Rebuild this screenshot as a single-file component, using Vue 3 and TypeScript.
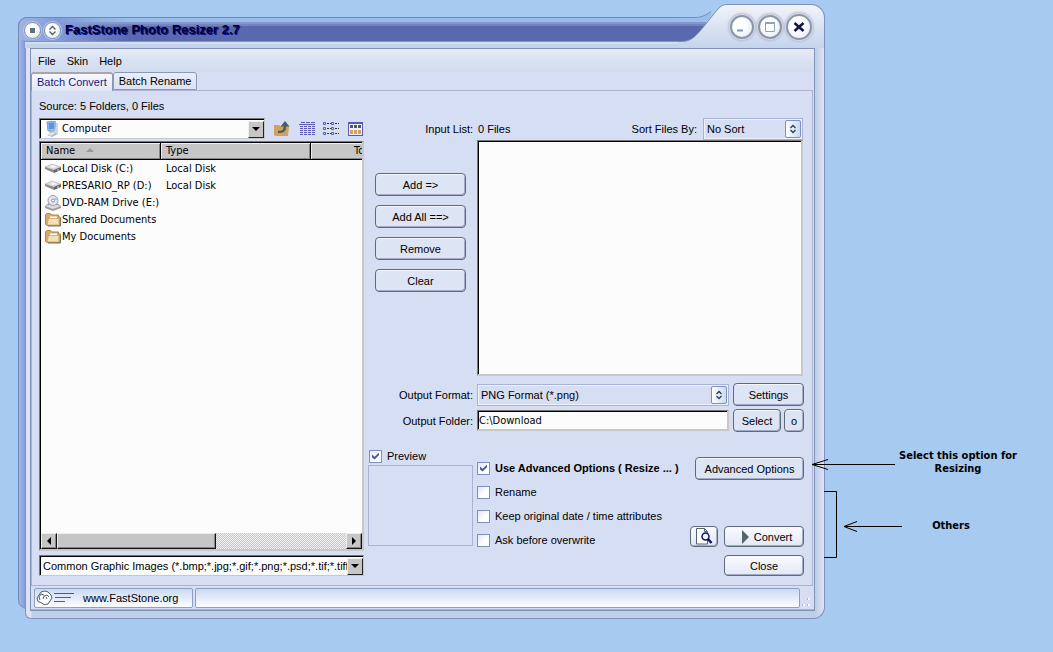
<script setup lang="ts">
import { ref } from 'vue'

interface Entry {
  name: string
  type: string
  icon: 'disk' | 'dvd' | 'folder'
}

const entries: Entry[] = [
  { name: 'Local Disk (C:)', type: 'Local Disk', icon: 'disk' },
  { name: 'PRESARIO_RP (D:)', type: 'Local Disk', icon: 'disk' },
  { name: 'DVD-RAM Drive (E:)', type: '', icon: 'dvd' },
  { name: 'Shared Documents', type: '', icon: 'folder' },
  { name: 'My Documents', type: '', icon: 'folder' },
]
const menus = ['File', 'Skin', 'Help']
const listActions = ['Add =>', 'Add All ==>', 'Remove', 'Clear']
const outputFolder = ref('C:\\Download')
const preview = ref(true)
const options = ref([
  { id: 'advanced', label: 'Use Advanced Options ( Resize ... )', on: true },
  { id: 'rename', label: 'Rename', on: false },
  { id: 'keep', label: 'Keep original date / time attributes', on: false },
  { id: 'ask', label: 'Ask before overwrite', on: false },
])
</script>

<template>
  <div class="page">
    <main class="window">
      <div class="shade"></div>
      <header class="titlebar">
        <div class="rail">
          <button class="orb small" type="button" aria-label="Window menu">
            <svg width="15" height="15" viewBox="0 0 15 15"><rect x="5" y="5" width="5" height="5" fill="#5d7480" /></svg>
          </button>
          <button class="orb small" type="button" aria-label="Roll up">
            <svg width="15" height="15" viewBox="0 0 15 15"><path d="M4.500 6.500l3-3 3 3M4.500 8.500l3 3 3-3" fill="none" stroke="#4d626e" stroke-width="1.400" /></svg>
          </button>
          <h1>FastStone Photo Resizer 2.7</h1>
        </div>
        <svg class="swoosh" width="50" height="44" viewBox="0 0 50 44">
          <defs>
            <linearGradient id="hood" x1="0" y1="0" x2="0" y2="1">
              <stop offset="0" stop-color="#f1f3fb" />
              <stop offset="0.500" stop-color="#dbe3f3" />
              <stop offset="1" stop-color="#c4d4ec" />
            </linearGradient>
          </defs>
          <path d="M0 13.500h17c7 0 12-3 16-6v5L10 38H0z" fill="#9bbdeb" />
          <path d="M0 18h30l-3 5H0z" fill="#8296d2" />
          <path d="M0 20h29l-2 4H0z" fill="#7585b4" />
          <path d="M0 22h28L15 37H0z" fill="#5a68ae" />
          <path d="M0 44V37.500h4c10 0 15-7 21-14S36 9 41 4c3-3 5-3.500 9-3.500V44z" fill="url(#hood)" />
          <path d="M0 13.500h17c7 0 12-3 16-6M0 37.500h4c10 0 15-7 21-14S36 9 41 4c3-3 5-3.500 9-3.500" fill="none" stroke="#7b8db6" />
        </svg>
        <div class="hood">
          <div class="orbs">
            <button class="orb" type="button" aria-label="Minimize">
              <svg width="20" height="20" viewBox="0 0 20 20"><path d="M5 13.500h6" stroke="#7f96b5" stroke-width="2" /></svg>
            </button>
            <button class="orb" type="button" aria-label="Maximize">
              <svg width="20" height="20" viewBox="0 0 20 20"><path d="M5.500 6v8.500h9V6M5 6h10" fill="none" stroke="#8ba2c4" /><path d="M5 6h10" stroke="#8ba2c4" stroke-width="2" /></svg>
            </button>
            <button class="orb big" type="button" aria-label="Close window">
              <svg width="22" height="22" viewBox="0 0 22 22"><path d="M6.500 7l9 8M15.500 7l-9 8" stroke="#16164f" stroke-width="2.600" /></svg>
            </button>
          </div>
        </div>
      </header>

      <div class="frame">
        <div class="client">
          <nav class="menu">
            <button v-for="m in menus" :key="m" type="button">{{ m }}</button>
          </nav>
          <div class="tabs">
            <button class="tab active" type="button">Batch Convert</button>
            <button class="tab" type="button">Batch Rename</button>
          </div>

          <div class="panel">
            <section class="source">
              <div class="caption">Source: 5 Folders, 0 Files</div>
              <div class="toolrow">
                <div class="combo drive">
                  <svg class="pc" width="16" height="16" viewBox="0 0 16 16">
                    <path d="M3 1l8-1 1 9-8 1z" fill="#9cc4ee" stroke="#7f9cc4" />
                    <path d="M4.500 2l5.500-.5.500 6-5.500 1z" fill="#5597e6" />
                    <path d="M12 2h2v11l-3 2V9z" fill="#cdd4dd" />
                    <path d="M5 10l5-1 1 3 2 1-5 3-5-2 3-1z" fill="#aeb8c6" />
                    <path d="M4 13l5-2 2 1-4 3z" fill="#e3e8ef" />
                  </svg>
                  <select aria-label="Drive"><option>Computer</option></select>
                  <span class="drop"></span>
                </div>
                <button class="tool" type="button" aria-label="Up one level">
                  <svg width="16" height="16" viewBox="0 0 16 16">
                    <path d="M0 4h5l1 1h9l-1 10H1L0 14z" fill="#d2a15c" />
                    <path d="M4 11c5 0 7-1 7-6" fill="none" stroke="#4a5d66" stroke-width="2.500" />
                    <path d="M6.500 5.500 11 0l4.500 5.500z" fill="#4a5d66" />
                  </svg>
                </button>
                <button class="tool" type="button" aria-label="Details">
                  <svg width="16" height="16" viewBox="0 0 16 16">
                    <path d="M2 1.500h14" stroke="#5a5ab4" stroke-dasharray="4 1" />
                    <path d="M0 3.500h16" stroke="#5a5ab4" />
                    <path d="M1 5.500h15M1 7.500h15M1 9.500h15M1 11.500h15M1 13.500h15" stroke="#5a5ab4" stroke-dasharray="3 1" />
                  </svg>
                </button>
                <button class="tool" type="button" aria-label="List">
                  <svg width="16" height="16" viewBox="0 0 16 16">
                    <path d="M.500 1.500h2v2h-2zM.500 6.500h2v2h-2zM.500 11.500h2v2h-2zM8.500 1.500h2v2h-2zM8.500 6.500h2v2h-2zM8.500 11.500h2v2h-2z" fill="none" stroke="#5a5ab4" />
                    <path d="M4 2.500h4M4 7.500h4M4 12.500h4M12 2.500h4M12 7.500h4M12 12.500h4" stroke="#333" stroke-dasharray="2 1" />
                  </svg>
                </button>
                <button class="tool" type="button" aria-label="Thumbnails">
                  <svg width="16" height="16" viewBox="0 0 16 16">
                    <rect x=".500" y="1.500" width="14" height="13" fill="#eef" stroke="#5a5ab4" />
                    <path d="M0 2h15" stroke="#5a5ab4" stroke-width="2" />
                    <path d="M2 5.500h11" stroke="#4a5d66" stroke-width="3" stroke-dasharray="3 1" />
                    <path d="M2 11h11" stroke="#d2a15c" stroke-width="4" stroke-dasharray="3 1" />
                  </svg>
                </button>
              </div>

              <div class="files sunken">
                <div class="viewport">
                  <table>
                    <thead>
                      <tr>
                        <th class="c-name">Name <span class="sort"></span></th>
                        <th class="c-type">Type</th>
                        <th class="c-total">Total</th>
                      </tr>
                    </thead>
                    <tbody>
                      <tr v-for="e in entries" :key="e.name">
                        <td>
                          <div class="entry">
                            <svg v-if="e.icon === 'disk'" width="16" height="16" viewBox="0 0 16 16">
                              <path d="M0 6l7-3 9 3-7 3z" fill="#d8d8d8" stroke="#a8a8a8" stroke-width=".500" />
                              <path d="M0 6l9 3v3L0 8z" fill="#8d8d8d" />
                              <path d="M9 9l7-3v3l-7 3z" fill="#636363" />
                              <path d="M4 6l4-2 4 2-4 1z" fill="#f4f4f4" />
                              <path d="M12 9h2" stroke="#d4e6d4" />
                            </svg>
                            <svg v-else-if="e.icon === 'dvd'" width="16" height="16" viewBox="0 0 16 16">
                              <path d="M0 11l4-3h8l4 3v2l-8 3-8-3z" fill="#9b9b9b" />
                              <path d="M0 11l8-2 8 2-8 3z" fill="#dcdcdc" />
                              <circle cx="8" cy="5.500" r="5" fill="#e3e6ee" stroke="#9ca0ab" />
                              <path d="M8 5 11.500 2a5 5 0 0 1 1 3z" fill="#a9c4f0" />
                              <circle cx="8" cy="5.500" r="1.500" fill="#fff" stroke="#8f94a3" />
                            </svg>
                            <svg v-else width="16" height="16" viewBox="0 0 16 16">
                              <path d="M.500 12.500V3l1-1.500h4L7 3h6.500v2h2l-.500 8.500H2z" fill="#d9a964" stroke="#b98a4b" />
                              <path d="M5 7V4.500h7V7z" fill="#fff" />
                              <path d="M2 13l1.500-6.500H14V13z" fill="#f3dfba" stroke="#c79c5c" stroke-width=".700" />
                              <path d="M15.500 6v8H3" fill="none" stroke="#7d7460" />
                            </svg>
                            {{ e.name }}
                          </div>
                        </td>
                        <td class="kind">{{ e.type }}</td>
                        <td></td>
                      </tr>
                    </tbody>
                  </table>
                </div>
                <div class="scroll">
                  <button class="cap" type="button" aria-label="Scroll left"><i class="left"></i></button>
                  <span class="thumb"></span>
                  <button class="cap end" type="button" aria-label="Scroll right"><i class="right"></i></button>
                </div>
              </div>

              <div class="combo filter">
                <select aria-label="File types"><option>Common Graphic Images (*.bmp;*.jpg;*.gif;*.png;*.psd;*.tif;*.tiff;*.pcx)</option></select>
                <span class="drop"></span>
              </div>
            </section>

            <section class="work">
              <div class="duo top">
                <span class="label">Input List:</span>
                <div class="listhead">
                  <span>0 Files</span>
                  <label for="sort">Sort Files By:</label>
                  <div class="flat sortbox">
                    <select id="sort"><option>No Sort</option></select>
                    <span class="spin"><svg width="8" height="10" viewBox="0 0 8 10"><path d="M1.500 4L4 1.500 6.500 4M1.500 6L4 8.500 6.500 6" fill="none" stroke="#2c3a58" stroke-width="1.300" /></svg></span>
                  </div>
                </div>
              </div>
              <div class="duo grow">
                <div class="actions">
                  <button v-for="a in listActions" :key="a" class="btn" type="button">{{ a }}</button>
                </div>
                <div class="input-list sunken"></div>
              </div>
              <div class="duo format">
                <label class="label" for="format">Output Format:</label>
                <div class="fields">
                  <div class="flat">
                    <select id="format"><option>PNG Format (*.png)</option></select>
                    <span class="spin"><svg width="8" height="10" viewBox="0 0 8 10"><path d="M1.500 4L4 1.500 6.500 4M1.500 6L4 8.500 6.500 6" fill="none" stroke="#2c3a58" stroke-width="1.300" /></svg></span>
                  </div>
                  <button class="btn settings" type="button">Settings</button>
                </div>
              </div>
              <div class="duo folder">
                <label class="label" for="folder">Output Folder:</label>
                <div class="fields">
                  <input id="folder" v-model="outputFolder" class="path" type="text" />
                  <button class="btn pick" type="button">Select</button>
                  <button class="btn open" type="button">o</button>
                </div>
              </div>
              <div class="duo bottom">
                <div class="preview">
                  <label class="check"><input v-model="preview" type="checkbox" />Preview</label>
                  <div class="thumbnail"></div>
                </div>
                <div class="final">
                  <div class="options">
                    <label v-for="o in options" :key="o.id" class="check" :class="o.id"><input v-model="o.on" type="checkbox" />{{ o.label }}</label>
                  </div>
                  <div class="commands">
                    <button class="btn adv" type="button">Advanced Options</button>
                    <div class="run">
                      <button class="btn glossy icon" type="button" aria-label="Preview result">
                        <svg width="18" height="17" viewBox="0 0 18 17">
                          <path d="M1.500.500h8l3 3V16h-11z" fill="#fff" stroke="#52646c" />
                          <path d="M9.500.500v3h3" fill="none" stroke="#52646c" />
                          <circle cx="10.500" cy="8.500" r="3.500" fill="#eef6ff" stroke="#10106e" stroke-width="1.500" />
                          <path d="M13 11l3.500 4" stroke="#10106e" stroke-width="2.500" />
                        </svg>
                      </button>
                      <button class="btn glossy go" type="button">
                        <svg width="7" height="14" viewBox="0 0 7 14"><path d="M0 0l7 7-7 7z" fill="#52646c" /></svg>
                        Convert
                      </button>
                    </div>
                    <button class="btn glossy go" type="button">Close</button>
                  </div>
                </div>
              </div>
            </section>
          </div>

          <footer class="status">
            <a class="site" href="#">
              <svg width="38" height="16" viewBox="0 0 38 16">
                <path d="M1 8l2-3 2-3 4-1 3 1 3 3 1 3-2 3-2 3-4 .500-3-2-3-1z" fill="#fff" stroke="#52606a" />
                <path d="M4 10l-1-3 2-3 3 1M7 9l1-3 3-1 2 2M11 9l-1-2" fill="none" stroke="#52606a" />
                <path d="M18 3.500h20M19 7.500h16M18 11.500h11" stroke="#52606a" />
              </svg>
              <span>www.FastStone.org</span>
            </a>
            <div class="message"></div>
            <svg class="grip" width="9" height="9" viewBox="0 0 9 9"><path d="M6 0h2v2H6zM6 6h2v2H6zM1 6h2v2H1z" fill="#fff" /><path d="M5 0h1v2H5zM5 6h1v2H5zM0 6h1v2H0z" fill="#a9b5d4" /></svg>
          </footer>
        </div>
      </div>
    </main>

    <aside class="notes">
      <svg class="arrows" width="96" height="104" viewBox="0 0 96 104" fill="none" stroke="#000">
        <path d="M1 9.500h83M17 4.500 1 9.500l16 5M34 71.500h57M46 66.500l-13 5 13 5M13 36.500h12.500v66H13" />
      </svg>
      <p class="resize-note">Select this option for<br />Resizing</p>
      <p class="others-note">Others</p>
    </aside>
  </div>
</template>

<style>
body {
  margin: 0;
  background: #a6caf0;
}
</style>

<style scoped>
* {
  box-sizing: border-box;
}
.page {
  min-height: 100vh;
  padding: 4px 0 33px 18px;
  display: grid;
  grid-template-columns: minmax(780px, 1fr) 228px;
  font: 11px/14px "Liberation Sans", Arial, sans-serif;
  color: #000;
  background: #a6caf0;
}
button,
select,
input {
  font: inherit;
  color: inherit;
  margin: 0;
  padding: 0;
}
button {
  background: none;
  border: 0;
}
svg {
  display: block;
  flex: none;
}
.window {
  position: relative;
  display: flex;
  flex-direction: column;
}
.shade {
  position: absolute;
  left: 0;
  top: 13px;
  bottom: 10px;
  width: 30px;
  background: linear-gradient(90deg, #a3b8e8, #7f99d8 7px);
  border: 1px solid #7487b8;
  border-radius: 9px 0 0 9px;
}
.titlebar {
  position: relative;
  display: flex;
  align-items: flex-end;
  height: 44px;
}
.rail {
  flex: 1;
  height: 31px;
  display: flex;
  align-items: flex-start;
  gap: 2px;
  padding: 4px 0 0 5px;
  border-top: 1px solid #7487b8;
  border-left: 1px solid #7487b8;
  border-radius: 9px 0 0 0;
  background:
    linear-gradient(90deg, #a3b8e8, #7f99d8) 0 100% / 6px 8px no-repeat,
    linear-gradient(90deg, #9db4e4 0, #839cd9 38px, #839cd900 110px) 0 0 / 100% 23px no-repeat,
    linear-gradient(#9bbdeb 0 4px, #8296d2 4px 6px, #7585b4 6px 8px, #5a68ae 8px 23px, #8795bb 23px 24px, #d3def0 24px 26px, #c3d3ea 26px);
}
.rail h1 {
  margin: 0 0 0 2px;
  font: bold 13px/16px "Liberation Sans", Arial, sans-serif;
  color: #000033;
  text-shadow: 1px 1px 0 #10108a;
  white-space: nowrap;
}
.orb {
  display: grid;
  place-items: center;
  width: 24px;
  height: 24px;
  border-radius: 50%;
  border: 2px solid #8a97aa;
  background: radial-gradient(circle at 40% 35%, #fff 30%, #dfe6f2);
  box-shadow: 0 0 0 1px #d4d8e6, 0 0 2px 2px #b9bed3;
}
.orb.small {
  width: 17px;
  height: 17px;
  border-width: 1px;
  box-shadow: 0 0 0 1px #b9c8e6;
}
.orb.small + .orb.small {
  margin-left: 1px;
}
.orb.big {
  width: 26px;
  height: 26px;
}
.hood {
  width: 97px;
  height: 44px;
  border-top: 1px solid #7f90bd;
  border-right: 1px solid #7f90bd;
  border-radius: 0 14px 0 0;
  background: linear-gradient(#f1f3fb, #dbe3f3 50%, #c4d4ec);
}
.orbs {
  display: flex;
  align-items: center;
  gap: 4px;
  padding: 9px 0 0 2px;
}
.frame {
  position: relative;
  flex: 1;
  display: flex;
  margin-left: 7px;
  padding: 0 9px 7px 4px;
  border: 1px solid #8292bd;
  border-top: 0;
  border-radius: 0 0 12px 6px;
  background: linear-gradient(90deg, #dde3f4 5px, #c0d0ea 6px 99%, #dfe3f4);
}
.client {
  flex: 1;
  min-width: 0;
  display: flex;
  flex-direction: column;
  border: 1px solid #8292b5;
  background: #d6def3;
}
.menu {
  height: 23px;
  display: flex;
  gap: 11px;
  padding: 1px 0 0 7px;
  background: linear-gradient(#e6ecf6, #d9e2f2 50%, #d1dcef);
}
.tabs {
  display: flex;
  align-items: flex-end;
  height: 18px;
}
.tab {
  height: 18px;
  padding: 0 5px;
  border: 1px solid #8b98b5;
  border-radius: 3px 3px 0 0;
  background: linear-gradient(#e9eef9, #dbe2f4);
}
.tab.active {
  height: 19px;
  padding-bottom: 2px;
  color: #191980;
  border-top: 2px solid #a6a6ac;
  border-bottom: 0;
  background: linear-gradient(#f8f9fe, #e1e6f5);
  margin-bottom: -1px;
  position: relative;
}
.panel {
  flex: 1;
  display: flex;
  gap: 4px;
  margin-right: 1px;
  padding: 8px 8px 9px 7px;
  border: 1px solid #adb2d0;
}
.source {
  width: 325px;
  display: flex;
  flex-direction: column;
}
.caption {
  height: 19px;
}
.toolrow {
  display: flex;
  align-items: center;
  justify-content: space-between;
}
.tool {
  width: 16px;
  height: 16px;
}
.combo {
  position: relative;
  display: flex;
  align-items: center;
  height: 21px;
  border: 1px solid #777;
  border-right-color: #c8c8c8;
  border-bottom-color: #c8c8c8;
  box-shadow: inset 1px 1px #000;
  background: #fcfcfc;
}
.combo select {
  flex: 1;
  min-width: 0;
  appearance: none;
  border: 0;
  background: none;
  padding-left: 3px;
}
.combo.drive {
  width: 226px;
  font-family: "DejaVu Sans Condensed", "DejaVu Sans", sans-serif;
}
.drive select {
  padding-left: 2px;
}
.pc {
  margin-left: 4px;
}
.drop {
  width: 16px;
  height: 17px;
  margin-top: 1px;
  display: grid;
  place-items: center;
  border: 1px solid #eee;
  border-right-color: #222;
  border-bottom-color: #222;
  background: #c6c6c6;
}
.drop::before {
  content: "";
  border: 4px solid transparent;
  border-top-color: #000;
  border-bottom: 0;
}
.sunken {
  border: 1px solid #777;
  border-right: 2px solid #c8c8c8;
  border-bottom: 2px solid #c8c8c8;
  background: #fcfcfc;
  box-shadow: inset 1px 1px #000;
}
.files {
  flex: 1;
  display: flex;
  flex-direction: column;
  margin: 2px 0 4px;
  padding: 1px 0 0 1px;
  font-family: "DejaVu Sans Condensed", "DejaVu Sans", sans-serif;
}
.viewport {
  flex: 1;
  overflow: hidden;
}
table {
  width: 400px;
  table-layout: fixed;
  border-collapse: separate;
  border-spacing: 0;
}
th {
  height: 17px;
  padding: 0 5px;
  text-align: left;
  font-weight: normal;
  line-height: 14px;
  background: #c6c6c6;
  border-right: 1px solid #000;
  border-bottom: 1px solid #000;
  box-shadow: inset 1px 1px #eee, inset -1px -1px #888;
}
.c-name {
  width: 120px;
}
.c-type {
  width: 150px;
}
.c-total {
  padding-left: 43px;
  white-space: nowrap;
}
.sort {
  display: inline-block;
  margin: 0 0 2px 8px;
  border: 4px solid transparent;
  border-top: 0;
  border-bottom-color: #999;
}
td {
  height: 17px;
  padding: 0;
  white-space: nowrap;
}
.entry {
  display: flex;
  align-items: center;
  gap: 1px;
  padding-left: 4px;
}
.kind {
  padding-left: 5px;
}
.scroll {
  display: flex;
  height: 16px;
  background: repeating-conic-gradient(#c6c6c6 0 25%, #f2f2f2 0 50%) 0 0 / 2px 2px;
}
.cap,
.thumb {
  width: 16px;
  border: 1px solid #eee;
  border-right-color: #111;
  border-bottom-color: #111;
  background: #c6c6c6;
  box-shadow: inset -1px -1px #888;
}
.cap {
  display: grid;
  place-items: center;
}
.cap.end {
  margin-left: auto;
}
.thumb {
  width: 159px;
}
.left,
.right {
  border: 4px solid transparent;
}
.left {
  border-right-color: #000;
  border-left: 0;
}
.right {
  border-left-color: #000;
  border-right: 0;
}
.work {
  flex: 1;
  min-width: 0;
  display: flex;
  flex-direction: column;
}
.duo {
  display: grid;
  grid-template-columns: 105px 1fr;
  column-gap: 4px;
  align-items: center;
}
.label {
  text-align: right;
}
.top {
  margin-top: 18px;
  height: 23px;
}
.listhead {
  display: flex;
  align-items: center;
  gap: 6px;
  height: 22px;
  padding: 0 1px;
}
.listhead label {
  margin-left: auto;
}
.flat {
  position: relative;
  flex: 1;
  display: flex;
  align-items: center;
  height: 22px;
  border: 1px solid #aab2d4;
  box-shadow: inset 0 0 0 1px #eef1fb;
  background: #d6def3;
}
.flat select {
  flex: 1;
  min-width: 0;
  appearance: none;
  border: 0;
  background: none;
  padding-left: 3px;
}
.flat.sortbox {
  flex: none;
  width: 100px;
}
.spin {
  width: 16px;
  height: 18px;
  margin-right: 1px;
  display: grid;
  place-items: center;
  border: 1px solid #7f90bd;
  border-radius: 2px;
  background: linear-gradient(90deg, #fff, #c9daf1);
}
.grow {
  flex: 1;
  align-items: stretch;
}
.input-list {
  margin-right: 1px;
}
.actions {
  display: flex;
  flex-direction: column;
  gap: 9px;
  padding: 33px 7px 0;
}
.btn {
  flex: none;
  height: 23px;
  border: 1px solid #5d6c78;
  border-radius: 4px;
  background: #dde4f4;
  box-shadow: inset 0 1px #f4f6fd, inset -1px -1px #a3abc4;
}
.btn:active {
  background: #c9d4ec;
}
.fields {
  display: flex;
  align-items: center;
  gap: 4px;
}
.format {
  margin-top: 7px;
}
.folder {
  margin-top: 3px;
}
.settings {
  width: 71px;
}
.pick {
  width: 48px;
}
.open {
  width: 20px;
  margin-left: -1px;
}
.path {
  flex: 1;
  min-width: 0;
  height: 21px;
  padding: 0 1px;
  border: 1px solid #777;
  border-right: 2px solid #c8c8c8;
  border-bottom: 2px solid #c8c8c8;
  background: #fcfcfc;
  box-shadow: inset 1px 1px #000;
  font-family: "DejaVu Sans Condensed", "DejaVu Sans", sans-serif;
}
.bottom {
  margin-top: 17px;
  height: 127px;
  align-items: start;
}
.check {
  display: flex;
  align-items: center;
  gap: 5px;
  height: 14px;
  white-space: nowrap;
}
.check input {
  appearance: none;
  width: 13px;
  height: 13px;
  border: 1px solid #7f90bd;
  background: linear-gradient(135deg, #dfe6f6, #fff 60%);
}
.check input:checked::before {
  content: "";
  display: block;
  width: 7px;
  height: 7px;
  margin: 2px;
  background: #5656b0;
  clip-path: polygon(0 30%, 38% 60%, 100% 0, 100% 38%, 38% 100%, 0 70%);
}
.preview .check {
  padding-left: 1px;
}
.thumbnail {
  height: 81px;
  margin-top: 2px;
  border: 1px solid #adb2d0;
}
.final {
  display: flex;
  justify-content: space-between;
}
.options {
  display: flex;
  flex-direction: column;
  gap: 10px;
  padding-top: 12px;
}
.advanced {
  font-weight: bold;
}
.commands {
  display: flex;
  flex-direction: column;
  align-items: flex-end;
  padding-top: 8px;
}
.adv {
  width: 109px;
  margin-bottom: 46px;
}
.run {
  display: flex;
  gap: 6px;
  margin-bottom: 8px;
}
.glossy {
  height: 21px;
  background: linear-gradient(#fafbff, #e2e8f6);
}
.go {
  width: 80px;
  display: flex;
  align-items: center;
  justify-content: center;
  gap: 5px;
}
.go:has(svg) {
  padding-left: 6px;
}
.icon {
  width: 28px;
  display: grid;
  place-items: center;
}
.status {
  display: flex;
  align-items: center;
  gap: 2px;
  height: 24px;
  padding: 0 3px;
  border-bottom: 1px solid #adb2d0;
}
.site,
.message {
  height: 20px;
  border: 1px solid #8e9fc2;
  border-radius: 2px;
  background: linear-gradient(#c9daf1, #e4ebf8 50%, #fcfdff);
}
.site {
  width: 159px;
  display: flex;
  align-items: center;
  gap: 9px;
  padding-left: 1px;
  color: #000;
  text-decoration: none;
}
.message {
  flex: 1;
}
.grip {
  align-self: flex-end;
  margin-bottom: 2px;
}
.notes {
  position: relative;
  font: bold 11px/13px "DejaVu Sans Condensed", "DejaVu Sans", sans-serif;
  text-align: center;
}
.notes p {
  margin: 0;
}
.arrows {
  position: absolute;
  left: -14px;
  top: 451px;
}
.resize-note {
  padding-left: 38px;
}
.notes .resize-note {
  margin-top: 445px;
}
.others-note {
  padding-left: 24px;
}
.notes .others-note {
  margin-top: 44px;
}
</style>
